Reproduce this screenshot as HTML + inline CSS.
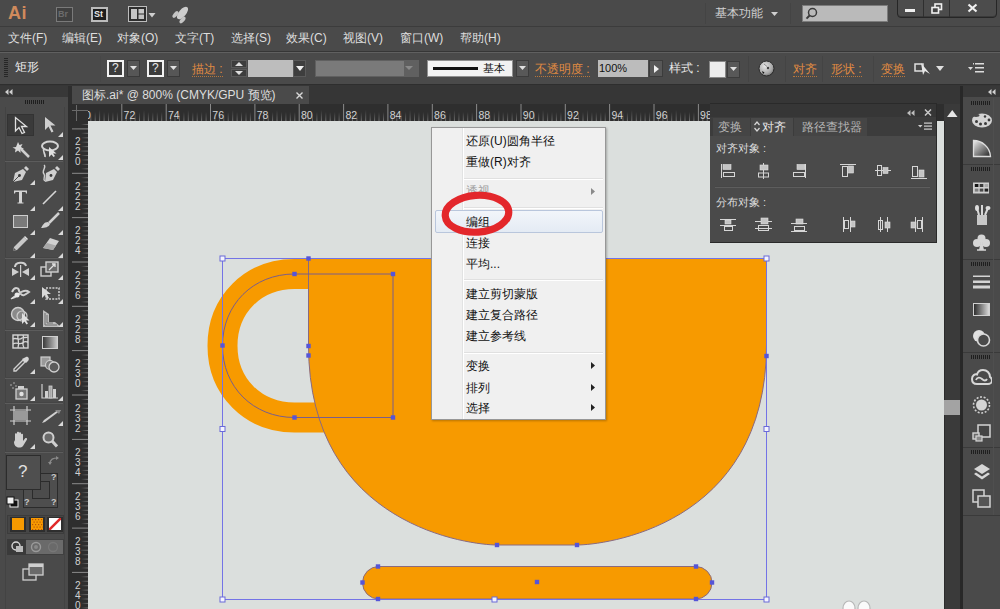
<!DOCTYPE html>
<html><head><meta charset="utf-8">
<style>
*{margin:0;padding:0;box-sizing:border-box}
html,body{width:1000px;height:609px;overflow:hidden;background:#4a4a4a;font-family:"Liberation Sans",sans-serif;color:#dcdcdc;position:relative}
.a{position:absolute;display:block}
.t{position:absolute;white-space:nowrap;font-size:12px;line-height:14px}
</style></head><body>
<div class="a" style="left:0px;top:0px;width:1000px;height:609px;background:#4a4a4a"></div>
<div class="a" style="left:0px;top:26px;width:1000px;height:1px;background:#3c3c3c"></div>
<div class="t" style="left:8px;top:2px;font-size:18px;line-height:22px;font-weight:bold;color:#d08a5c;letter-spacing:0.5px">Ai</div>
<div class="a" style="left:56px;top:7px;width:17px;height:15px;border:1px solid #7a7a7a;background:#404040"></div>
<div class="t" style="left:58px;top:9px;font-size:9px;line-height:11px;font-weight:bold;color:#6c6c6c">Br</div>
<div class="a" style="left:91px;top:7px;width:17px;height:15px;border:2px solid #bcbcbc;background:#1e1e1e"></div>
<div class="t" style="left:94px;top:9px;font-size:9px;line-height:11px;font-weight:bold;color:#e6e6e6">St</div>
<svg class="a" style="left:128px;top:6px;" width="29" height="16" viewBox="0 0 29 16"><rect x="0.5" y="0.5" width="18" height="15" fill="#2e2e2e" stroke="#bdbdbd" stroke-width="1"/><rect x="3" y="3" width="6" height="10" fill="#c6c6c6"/><rect x="10.5" y="3" width="5.5" height="4.5" fill="#c6c6c6"/><rect x="10.5" y="8.5" width="5.5" height="4.5" fill="#c0c0c0"/><path d="M20.5 7 h7 l-3.5 4.5z" fill="#cfcfcf"/></svg>
<svg class="a" style="left:169px;top:5px;" width="22" height="20" viewBox="0 0 22 20"><ellipse cx="13.5" cy="8" rx="7.5" ry="3.6" transform="rotate(-50 13.5 8)" fill="#cdcdcd"/><ellipse cx="6.5" cy="9.5" rx="4" ry="2" transform="rotate(-50 6.5 9.5)" fill="#c4c4c4"/><ellipse cx="13.5" cy="15" rx="4" ry="2" transform="rotate(-50 13.5 15)" fill="#c4c4c4"/></svg>
<div class="a" style="left:705px;top:3px;width:1px;height:21px;background:#444"></div>
<div class="a" style="left:790px;top:3px;width:1px;height:21px;background:#444"></div>
<div class="t" style="left:715px;top:6px;font-size:12px;line-height:15px;color:#d2d2d2">基本功能</div>
<svg class="a" style="left:771px;top:12px;" width="7" height="4" viewBox="0 0 7 4"><path d="M0 0h7l-3.5 4z" fill="#d0d0d0"/></svg>
<div class="a" style="left:802px;top:5px;width:86px;height:17px;background:#bababa;border:1px solid #7c7c7c"></div>
<svg class="a" style="left:805px;top:7px;" width="13" height="13" viewBox="0 0 13 13"><circle cx="7.5" cy="5.5" r="4" fill="none" stroke="#3a3a3a" stroke-width="1.5"/><path d="M4.8 8.3 L1.5 11.6" stroke="#3a3a3a" stroke-width="2"/></svg>
<div class="a" style="left:897px;top:-2px;width:100px;height:20px;background:#4c4c4c;border:1px solid #262626;border-radius:0 0 4px 4px;box-shadow:inset 0 -1px 0 #3a3a3a"></div>
<div class="a" style="left:923px;top:0px;width:1px;height:17px;background:#2f2f2f"></div>
<div class="a" style="left:949px;top:0px;width:1px;height:17px;background:#2f2f2f"></div>
<div class="a" style="left:905px;top:9px;width:10px;height:3px;background:#f0f0f0"></div>
<svg class="a" style="left:931px;top:3px;" width="12" height="11" viewBox="0 0 12 11"><rect x="4" y="1" width="6.5" height="5.5" fill="none" stroke="#f0f0f0" stroke-width="1.6"/><rect x="1" y="4.5" width="6.5" height="5.5" fill="#444" stroke="#f0f0f0" stroke-width="1.6"/></svg>
<svg class="a" style="left:967px;top:3px;" width="11" height="10" viewBox="0 0 11 10"><path d="M1.5 1.5 L9.5 8.5 M9.5 1.5 L1.5 8.5" stroke="#f0f0f0" stroke-width="2.2"/></svg>
<div class="a" style="left:0px;top:51px;width:1000px;height:1px;background:#363636"></div>
<div class="t" style="left:8px;top:31px;font-size:12px;line-height:15px;color:#dedede">文件(F)</div>
<div class="t" style="left:62px;top:31px;font-size:12px;line-height:15px;color:#dedede">编辑(E)</div>
<div class="t" style="left:117px;top:31px;font-size:12px;line-height:15px;color:#dedede">对象(O)</div>
<div class="t" style="left:175px;top:31px;font-size:12px;line-height:15px;color:#dedede">文字(T)</div>
<div class="t" style="left:231px;top:31px;font-size:12px;line-height:15px;color:#dedede">选择(S)</div>
<div class="t" style="left:286px;top:31px;font-size:12px;line-height:15px;color:#dedede">效果(C)</div>
<div class="t" style="left:343px;top:31px;font-size:12px;line-height:15px;color:#dedede">视图(V)</div>
<div class="t" style="left:400px;top:31px;font-size:12px;line-height:15px;color:#dedede">窗口(W)</div>
<div class="t" style="left:460px;top:31px;font-size:12px;line-height:15px;color:#dedede">帮助(H)</div>
<div class="a" style="left:0px;top:52px;width:1000px;height:1px;background:#606060"></div>
<div class="a" style="left:0px;top:84px;width:1000px;height:1px;background:#2e2e2e"></div>
<svg class="a" style="left:4px;top:58px;" width="5" height="20" viewBox="0 0 5 20"><rect x="0" y="0" width="4" height="1" fill="#262626"/><rect x="0" y="2" width="4" height="1" fill="#262626"/><rect x="0" y="4" width="4" height="1" fill="#262626"/><rect x="0" y="6" width="4" height="1" fill="#262626"/><rect x="0" y="8" width="4" height="1" fill="#262626"/><rect x="0" y="10" width="4" height="1" fill="#262626"/><rect x="0" y="12" width="4" height="1" fill="#262626"/><rect x="0" y="14" width="4" height="1" fill="#262626"/><rect x="0" y="16" width="4" height="1" fill="#262626"/><rect x="0" y="18" width="4" height="1" fill="#262626"/></svg>
<div class="t" style="left:15px;top:60px;font-size:12px;line-height:14px;font-weight:500;color:#ececec">矩形</div>
<div class="a" style="left:100px;top:56px;width:1px;height:26px;background:#474747"></div>
<div class="a" style="left:107px;top:60px;width:17px;height:17px;border:2px solid #f2f2f2;background:#3c3c3c"></div>
<div class="t" style="left:112px;top:62px;font-size:12px;line-height:13px;color:#e8e8e8">?</div>
<div class="a" style="left:127px;top:60px;width:13px;height:17px;background:#565656;border:1px solid #3a3a3a"></div>
<svg class="a" style="left:130px;top:66px;" width="7" height="4" viewBox="0 0 7 4"><path d="M0 0h7l-3.5 4z" fill="#e0e0e0"/></svg>
<div class="a" style="left:147px;top:60px;width:17px;height:17px;border:2px solid #f2f2f2;background:#3c3c3c"></div>
<div class="t" style="left:152px;top:62px;font-size:12px;line-height:13px;color:#e8e8e8">?</div>
<div class="a" style="left:167px;top:60px;width:13px;height:17px;background:#565656;border:1px solid #3a3a3a"></div>
<svg class="a" style="left:170px;top:66px;" width="7" height="4" viewBox="0 0 7 4"><path d="M0 0h7l-3.5 4z" fill="#e0e0e0"/></svg>
<div class="t" style="left:192px;top:62px;font-size:12px;line-height:14px;font-weight:500;color:#e08a42;border-bottom:1px dotted #b8763a">描边 :</div>
<div class="a" style="left:231px;top:60px;width:16px;height:8px;background:#3d3d3d;border:1px solid #5a5a5a"></div>
<div class="a" style="left:231px;top:69px;width:16px;height:8px;background:#3d3d3d;border:1px solid #5a5a5a"></div>
<svg class="a" style="left:235px;top:62px;" width="8" height="4" viewBox="0 0 8 4"><path d="M0 4h8l-4-4z" fill="#ddd"/></svg>
<svg class="a" style="left:235px;top:71px;" width="8" height="4" viewBox="0 0 8 4"><path d="M0 0h8l-4 4z" fill="#ddd"/></svg>
<div class="a" style="left:248px;top:60px;width:45px;height:17px;background:#bdbdbd"></div>
<div class="a" style="left:293px;top:60px;width:13px;height:17px;background:#3e3e3e;border:1px solid #5a5a5a"></div>
<svg class="a" style="left:296px;top:66px;" width="8" height="5" viewBox="0 0 8 5"><path d="M0 0h8l-4 5z" fill="#f0f0f0"/></svg>
<div class="a" style="left:315px;top:60px;width:104px;height:17px;background:#7a7a7a;border:1px solid #606060"></div>
<div class="a" style="left:404px;top:61px;width:14px;height:15px;background:#606060"></div>
<svg class="a" style="left:405px;top:66px;" width="8" height="4" viewBox="0 0 8 4"><path d="M0 0h8l-4 4z" fill="#8a8a8a"/></svg>
<div class="a" style="left:427px;top:60px;width:86px;height:17px;background:#f2f2f2;border:1px solid #909090"></div>
<div class="a" style="left:433px;top:67px;width:45px;height:3px;background:#111"></div>
<div class="t" style="left:483px;top:62px;font-size:11px;line-height:13px;color:#111">基本</div>
<div class="a" style="left:516px;top:60px;width:13px;height:17px;background:#585858;border:1px solid #3c3c3c"></div>
<svg class="a" style="left:519px;top:66px;" width="7" height="4" viewBox="0 0 7 4"><path d="M0 0h7l-3.5 4z" fill="#e0e0e0"/></svg>
<div class="t" style="left:535px;top:62px;font-size:12px;line-height:14px;font-weight:500;color:#e08a42;border-bottom:1px dotted #b8763a">不透明度 :</div>
<div class="a" style="left:598px;top:60px;width:50px;height:17px;background:#bcbcbc"></div>
<div class="t" style="left:599px;top:62px;font-size:11px;line-height:13px;color:#111">100%</div>
<div class="a" style="left:649px;top:60px;width:14px;height:17px;background:#585858;border:1px solid #3c3c3c"></div>
<svg class="a" style="left:654px;top:65px;" width="5" height="8" viewBox="0 0 5 8"><path d="M0 0v8l5-4z" fill="#f0f0f0"/></svg>
<div class="t" style="left:669px;top:61px;font-size:12px;line-height:14px;font-weight:500;color:#e6e6e6">样式 :</div>
<div class="a" style="left:709px;top:61px;width:17px;height:17px;background:#ececec;border:1px solid #888"></div>
<div class="a" style="left:727px;top:61px;width:13px;height:17px;background:#585858;border:1px solid #3c3c3c"></div>
<svg class="a" style="left:730px;top:67px;" width="7" height="4" viewBox="0 0 7 4"><path d="M0 0h7l-3.5 4z" fill="#e0e0e0"/></svg>
<div class="a" style="left:748px;top:56px;width:1px;height:26px;background:#444"></div>
<svg class="a" style="left:758px;top:60px" width="17" height="17" viewBox="0 0 17 17"><defs><radialGradient id="gl" cx="0.4" cy="0.35" r="0.7"><stop offset="0" stop-color="#e6e6e6"/><stop offset="0.7" stop-color="#a8a8a8"/><stop offset="1" stop-color="#6a6a6a"/></radialGradient></defs><circle cx="8.5" cy="8.5" r="7.5" fill="url(#gl)" stroke="#2a2a2a" stroke-width="1"/><path d="M4 11 L6.5 12.5 L5 14z" fill="#111"/><circle cx="10" cy="8" r="1.2" fill="#444"/><path d="M6 4 L9 6.5" stroke="#777" stroke-width="0.8"/></svg>
<div class="a" style="left:785px;top:56px;width:1px;height:26px;background:#444"></div>
<div class="t" style="left:793px;top:62px;font-size:12px;line-height:14px;font-weight:500;color:#e08a42;border-bottom:1px dotted #b8763a">对齐</div>
<div class="a" style="left:822px;top:56px;width:1px;height:26px;background:#444"></div>
<div class="t" style="left:831px;top:62px;font-size:12px;line-height:14px;font-weight:500;color:#e08a42;border-bottom:1px dotted #b8763a">形状 :</div>
<div class="a" style="left:873px;top:56px;width:1px;height:26px;background:#444"></div>
<div class="t" style="left:881px;top:62px;font-size:12px;line-height:14px;font-weight:500;color:#e08a42;border-bottom:1px dotted #b8763a">变换</div>
<svg class="a" style="left:914px;top:60px;" width="18" height="16" viewBox="0 0 18 16"><rect x="1" y="4" width="8" height="7" fill="none" stroke="#e0e0e0" stroke-width="1.5"/><path d="M7 3 L16 14 L11 11 L9 15Z" fill="#e8e8e8"/></svg>
<svg class="a" style="left:936px;top:66px;" width="8" height="5" viewBox="0 0 8 5"><path d="M0 0h8l-4 5z" fill="#e0e0e0"/></svg>
<svg class="a" style="left:967px;top:62px;" width="18" height="12" viewBox="0 0 18 12"><path d="M1 5h5l-2.5 3z" fill="#ddd"/><rect x="8" y="1" width="9" height="1.5" fill="#ddd"/><rect x="8" y="5" width="9" height="1.5" fill="#ddd"/><rect x="8" y="9" width="9" height="1.5" fill="#ddd"/><rect x="6" y="1" width="1" height="1.5" fill="#ddd"/></svg>
<div class="a" style="left:0px;top:85px;width:1000px;height:524px;background:#363636"></div>
<div class="a" style="left:0px;top:86px;width:68px;height:523px;background:#4a4a4a"></div>
<div class="a" style="left:0px;top:86px;width:68px;height:11px;background:#383838"></div>
<div class="a" style="left:68px;top:86px;width:4px;height:523px;background:#2e2e2e"></div>
<div class="a" style="left:5px;top:107px;width:1px;height:502px;background:#434343"></div>
<div class="a" style="left:64px;top:107px;width:1px;height:502px;background:#434343"></div>
<svg class="a" style="left:5px;top:89px;" width="8" height="6" viewBox="0 0 8 6"><path d="M3.5 0v6L0 3z M7.5 0v6L4 3z" fill="#cfcfcf"/></svg>
<svg class="a" style="left:25px;top:100px;" width="20" height="5" viewBox="0 0 20 5"><rect x="0" y="0" width="1" height="4" fill="#1e1e1e"/><rect x="2" y="0" width="1" height="4" fill="#1e1e1e"/><rect x="4" y="0" width="1" height="4" fill="#1e1e1e"/><rect x="6" y="0" width="1" height="4" fill="#1e1e1e"/><rect x="8" y="0" width="1" height="4" fill="#1e1e1e"/><rect x="10" y="0" width="1" height="4" fill="#1e1e1e"/><rect x="12" y="0" width="1" height="4" fill="#1e1e1e"/><rect x="14" y="0" width="1" height="4" fill="#1e1e1e"/><rect x="16" y="0" width="1" height="4" fill="#1e1e1e"/><rect x="18" y="0" width="1" height="4" fill="#1e1e1e"/></svg>
<div class="a" style="left:7px;top:114px;width:27px;height:22px;background:#3a3a3a;border:1px solid #333"></div>
<div class="a" style="left:5px;top:160px;width:58px;height:1px;background:#454545"></div>
<div class="a" style="left:5px;top:161px;width:58px;height:1px;background:#5c5c5c"></div>
<div class="a" style="left:5px;top:257px;width:58px;height:1px;background:#454545"></div>
<div class="a" style="left:5px;top:258px;width:58px;height:1px;background:#5c5c5c"></div>
<div class="a" style="left:5px;top:329px;width:58px;height:1px;background:#454545"></div>
<div class="a" style="left:5px;top:330px;width:58px;height:1px;background:#5c5c5c"></div>
<div class="a" style="left:5px;top:377px;width:58px;height:1px;background:#454545"></div>
<div class="a" style="left:5px;top:378px;width:58px;height:1px;background:#5c5c5c"></div>
<div class="a" style="left:5px;top:402px;width:58px;height:1px;background:#454545"></div>
<div class="a" style="left:5px;top:403px;width:58px;height:1px;background:#5c5c5c"></div>
<div class="a" style="left:5px;top:451px;width:58px;height:1px;background:#454545"></div>
<div class="a" style="left:5px;top:452px;width:58px;height:1px;background:#5c5c5c"></div>
<svg class="a" style="left:13px;top:116px;" width="16" height="19" viewBox="0 0 16 19"><path d="M2.5 1.5 V15 L6 11.5 L9 17.5 L11.5 16.5 L8.5 10.5 L13.5 10.5 Z" fill="#3a3a3a" stroke="#e0e0e0" stroke-width="1.3"/></svg>
<svg class="a" style="left:43px;top:116px;" width="15" height="18" viewBox="0 0 15 18"><path d="M2 1 V14 L5.5 10.5 L8.5 16.5 L10.5 15.5 L7.5 9.5 L12.5 9.5 Z" fill="#cfcfcf"/></svg>
<svg class="a" style="left:58px;top:132px;" width="5" height="5" viewBox="0 0 5 5"><path d="M5 0V5H0z" fill="#d8d8d8"/></svg>
<svg class="a" style="left:11px;top:139px;" width="20" height="19" viewBox="0 0 20 19"><path d="M7 3 l1.5 3 3-1 -1.5 3 3 2 -3.5 .5 0 3.5 -2.5-2.5 -3 2 .5-3.5 -3-1.5 3.5-.5z" fill="#d8d8d8"/><path d="M10 10 L18 18" stroke="#cfcfcf" stroke-width="2.5"/></svg>
<svg class="a" style="left:40px;top:140px;" width="20" height="18" viewBox="0 0 20 18"><ellipse cx="10" cy="6" rx="8" ry="4.5" fill="none" stroke="#d4d4d4" stroke-width="2"/><path d="M4 8 C2 12 6 14 5 17" fill="none" stroke="#d4d4d4" stroke-width="1.8"/><path d="M9 7 V17 L11.5 14.5 L13.5 17 L15 16 L13 13.5 L16.5 13.5Z" fill="#e0e0e0"/></svg>
<svg class="a" style="left:58px;top:155px;" width="5" height="5" viewBox="0 0 5 5"><path d="M5 0V5H0z" fill="#d8d8d8"/></svg>
<svg class="a" style="left:11px;top:165px;" width="19" height="18" viewBox="0 0 19 18"><path d="M15 1 L18 4 L16 6 L13 3Z" fill="#d0d0d0"/><path d="M12 4 L15 7 L11 15 L2 17 L4 8Z" fill="#cfcfcf"/><circle cx="8.5" cy="10.5" r="1.4" fill="#3a3a3a"/><path d="M2 17 L8 11" stroke="#3a3a3a" stroke-width="0.9"/></svg>
<svg class="a" style="left:30px;top:180px;" width="5" height="5" viewBox="0 0 5 5"><path d="M5 0V5H0z" fill="#d8d8d8"/></svg>
<svg class="a" style="left:40px;top:164px;" width="21" height="19" viewBox="0 0 21 19"><path d="M17 2 L20 5 L18 7 L15 4Z" fill="#d0d0d0"/><path d="M14 5 L17 8 L13 16 L5 18 L6 9Z" fill="#cfcfcf"/><circle cx="11" cy="11.5" r="1.4" fill="#3a3a3a"/><path d="M4 1 C7 3 1 7 4 10 C6 13 2 15 5 17" fill="none" stroke="#cfcfcf" stroke-width="1.4"/></svg>
<svg class="a" style="left:13px;top:189px;" width="15" height="15" viewBox="0 0 15 15"><path d="M1 1.5 H14 V4.5 H13 L12.5 3 H9 V13.5 H10.5 V14.5 H4.5 V13.5 H6 V3 H2.5 L2 4.5 H1Z" fill="#d4d4d4"/></svg>
<svg class="a" style="left:30px;top:206px;" width="5" height="5" viewBox="0 0 5 5"><path d="M5 0V5H0z" fill="#d8d8d8"/></svg>
<svg class="a" style="left:41px;top:190px;" width="16" height="15" viewBox="0 0 16 15"><path d="M2 14 L15 1" stroke="#d6d6d6" stroke-width="1.6"/></svg>
<svg class="a" style="left:58px;top:206px;" width="5" height="5" viewBox="0 0 5 5"><path d="M5 0V5H0z" fill="#d8d8d8"/></svg>
<div class="a" style="left:13px;top:215px;width:15px;height:13px;background:#7a7a7a;border:1.5px solid #cdcdcd"></div>
<svg class="a" style="left:30px;top:230px;" width="5" height="5" viewBox="0 0 5 5"><path d="M5 0V5H0z" fill="#d8d8d8"/></svg>
<svg class="a" style="left:40px;top:212px;" width="20" height="17" viewBox="0 0 20 17"><path d="M19 1 L9 11" stroke="#d0d0d0" stroke-width="2.5"/><path d="M8 10 C4 10 3 13 1 16 C5 16 9 15 10 12Z" fill="#d0d0d0"/></svg>
<svg class="a" style="left:58px;top:230px;" width="5" height="5" viewBox="0 0 5 5"><path d="M5 0V5H0z" fill="#d8d8d8"/></svg>
<svg class="a" style="left:11px;top:235px;" width="18" height="18" viewBox="0 0 18 18"><path d="M13 2 L16 5 L6 15 L2 16 L3 12Z" fill="#c8c8c8"/><path d="M13 2 L16 5 L17 4 L14 1Z" fill="#e6e6e6"/><path d="M2 16 L3 13 L5 15Z" fill="#555"/></svg>
<svg class="a" style="left:30px;top:253px;" width="5" height="5" viewBox="0 0 5 5"><path d="M5 0V5H0z" fill="#d8d8d8"/></svg>
<svg class="a" style="left:41px;top:237px;" width="19" height="15" viewBox="0 0 19 15"><path d="M9 1 L18 4 L12 13 L2 11Z" fill="#d0d0d0"/><path d="M2 11 L6 6 L15 8.5 L12 13Z" fill="#a8a8a8"/></svg>
<svg class="a" style="left:58px;top:253px;" width="5" height="5" viewBox="0 0 5 5"><path d="M5 0V5H0z" fill="#d8d8d8"/></svg>
<svg class="a" style="left:11px;top:260px;" width="19" height="17" viewBox="0 0 19 17"><path d="M4 7 C4 2 14 1 15 6" fill="none" stroke="#cfcfcf" stroke-width="2"/><path d="M1 8 L8 12 L1 16Z M18 8 L11 12 L18 16Z" fill="#cfcfcf"/><rect x="9" y="5" width="1.2" height="12" fill="#cfcfcf"/></svg>
<svg class="a" style="left:30px;top:275px;" width="5" height="5" viewBox="0 0 5 5"><path d="M5 0V5H0z" fill="#d8d8d8"/></svg>
<svg class="a" style="left:40px;top:261px;" width="19" height="16" viewBox="0 0 19 16"><rect x="1" y="6" width="10" height="9" fill="none" stroke="#cfcfcf" stroke-width="1.4"/><rect x="6" y="1" width="12" height="10" fill="#6a6a6a" stroke="#cfcfcf" stroke-width="1.4"/><path d="M9 9 L15 3 M12 3 H15 V6" stroke="#e0e0e0" stroke-width="1.3" fill="none"/></svg>
<svg class="a" style="left:58px;top:275px;" width="5" height="5" viewBox="0 0 5 5"><path d="M5 0V5H0z" fill="#d8d8d8"/></svg>
<svg class="a" style="left:10px;top:284px;" width="21" height="17" viewBox="0 0 21 17"><path d="M2 8 C5 2 9 4 9 7 C10 11 14 4 19 8 C16 10 13 13 11 10 C8 8 6 15 2 14" fill="none" stroke="#d0d0d0" stroke-width="2"/><circle cx="7" cy="11" r="2.5" fill="#e8e8e8"/><path d="M1 15 L5 12" stroke="#ddd" stroke-width="1.3"/></svg>
<svg class="a" style="left:30px;top:299px;" width="5" height="5" viewBox="0 0 5 5"><path d="M5 0V5H0z" fill="#d8d8d8"/></svg>
<svg class="a" style="left:41px;top:286px;" width="19" height="14" viewBox="0 0 19 14"><rect x="5" y="2" width="13" height="11" fill="none" stroke="#d0d0d0" stroke-width="1.5" stroke-dasharray="2 1.2"/><path d="M1 1 V12 L4 9 L6 13 L8 12 L6 8 L10 8Z" fill="#d8d8d8"/></svg>
<svg class="a" style="left:58px;top:299px;" width="5" height="5" viewBox="0 0 5 5"><path d="M5 0V5H0z" fill="#d8d8d8"/></svg>
<svg class="a" style="left:10px;top:306px;" width="22" height="19" viewBox="0 0 22 19"><circle cx="8" cy="8" r="6.5" fill="#8a8a8a" stroke="#cfcfcf" stroke-width="1.4"/><circle cx="12" cy="10" r="5" fill="none" stroke="#cfcfcf" stroke-width="1.2"/><path d="M12 7 V18 L14.5 15.5 L16.5 18.5 L18 17.5 L16 14.5 L19.5 14.5Z" fill="#e0e0e0"/></svg>
<svg class="a" style="left:30px;top:322px;" width="5" height="5" viewBox="0 0 5 5"><path d="M5 0V5H0z" fill="#d8d8d8"/></svg>
<svg class="a" style="left:41px;top:309px;" width="21" height="19" viewBox="0 0 21 19"><path d="M2 1 V18 H20 L14 13 H8 V5Z" fill="#bdbdbd"/><path d="M4 4 V16 H16 M6 6 V14 H12" stroke="#6f6f6f" stroke-width="1" fill="none"/></svg>
<svg class="a" style="left:58px;top:322px;" width="5" height="5" viewBox="0 0 5 5"><path d="M5 0V5H0z" fill="#d8d8d8"/></svg>
<svg class="a" style="left:12px;top:334px;" width="17" height="15" viewBox="0 0 17 15"><rect x="1" y="1" width="15" height="13" fill="#4a4a4a" stroke="#d6d6d6" stroke-width="1.4"/><path d="M1 5 C4 3 7 7 10 4 C12 3 14 4 16 3 M1 10 C5 7 8 12 12 8 C13 7 15 8 16 8 M6 1 C5 5 8 8 6 14 M11 1 C13 5 9 9 12 14" fill="none" stroke="#d6d6d6" stroke-width="1.3"/></svg>
<div class="a" style="left:42px;top:336px;width:16px;height:13px;border:1px solid #cfcfcf;background:linear-gradient(90deg,#3a3a3a,#c8c8c8)"></div>
<svg class="a" style="left:12px;top:355px;" width="18" height="18" viewBox="0 0 18 18"><path d="M11 5 L13 7 L4 16 L2 16 L2 14Z" fill="none" stroke="#d0d0d0" stroke-width="1.4"/><path d="M10 4 L14 8 L16 6 C18 4 16 1 14 2Z" fill="#d6d6d6"/></svg>
<svg class="a" style="left:30px;top:369px;" width="5" height="5" viewBox="0 0 5 5"><path d="M5 0V5H0z" fill="#d8d8d8"/></svg>
<svg class="a" style="left:40px;top:356px;" width="20" height="17" viewBox="0 0 20 17"><rect x="1" y="1" width="9" height="9" fill="#9a9a9a" stroke="#d0d0d0" stroke-width="1.2"/><circle cx="10" cy="9" r="4.5" fill="#7a7a7a" stroke="#d0d0d0" stroke-width="1.2"/><circle cx="14" cy="11" r="5" fill="#5a5a5a" stroke="#d0d0d0" stroke-width="1.3"/></svg>
<svg class="a" style="left:9px;top:382px;" width="22" height="18" viewBox="0 0 22 18"><path d="M1 3 h2 M4 1 h2 M3 6 h2 M6 4 h2" stroke="#aaa" stroke-width="1"/><rect x="9" y="4" width="6" height="3" fill="#cfcfcf"/><rect x="7" y="7" width="11" height="10" fill="#777" stroke="#d0d0d0" stroke-width="1.3"/><circle cx="12.5" cy="12" r="2.2" fill="#e0e0e0"/></svg>
<svg class="a" style="left:30px;top:396px;" width="5" height="5" viewBox="0 0 5 5"><path d="M5 0V5H0z" fill="#d8d8d8"/></svg>
<svg class="a" style="left:41px;top:383px;" width="18" height="16" viewBox="0 0 18 16"><path d="M1 1 V15 H17" stroke="#d0d0d0" stroke-width="1.2" fill="none"/><rect x="4" y="8" width="3" height="7" fill="#d0d0d0"/><rect x="8" y="3" width="3" height="12" fill="#a8a8a8" stroke="#d0d0d0" stroke-width="0.8"/><rect x="12" y="6" width="3" height="9" fill="#d0d0d0"/></svg>
<svg class="a" style="left:58px;top:396px;" width="5" height="5" viewBox="0 0 5 5"><path d="M5 0V5H0z" fill="#d8d8d8"/></svg>
<svg class="a" style="left:9px;top:405px;" width="23" height="21" viewBox="0 0 23 21"><path d="M5 1 V20 M18 1 V20 M1 5 H22 M1 16 H22" stroke="#cfcfcf" stroke-width="1.2"/><rect x="6" y="6" width="11" height="9" fill="#9a9a9a"/></svg>
<svg class="a" style="left:41px;top:409px;" width="21" height="15" viewBox="0 0 21 15"><path d="M20 1 L4 13 L1 14 L3 11 L17 1Z" fill="#d0d0d0"/><path d="M14 1 L20 1 L18 5Z" fill="#888"/></svg>
<svg class="a" style="left:58px;top:421px;" width="5" height="5" viewBox="0 0 5 5"><path d="M5 0V5H0z" fill="#d8d8d8"/></svg>
<svg class="a" style="left:11px;top:431px;" width="19" height="17" viewBox="0 0 19 17"><path d="M4 9 V3 C4 2 6 2 6 3 V8 V1.5 C6 0.5 8 0.5 8 1.5 V8 V2 C8 1 10 1 10 2 V8 V3.5 C10 2.5 12 2.5 12 3.5 V10 L14 7.5 C15 6.5 16.5 7.5 16 8.5 L12 15 C11 16 10 16.5 8 16.5 C5 16.5 3 14 3 11 Z" fill="#cfcfcf"/></svg>
<svg class="a" style="left:30px;top:444px;" width="5" height="5" viewBox="0 0 5 5"><path d="M5 0V5H0z" fill="#d8d8d8"/></svg>
<svg class="a" style="left:42px;top:431px;" width="16" height="17" viewBox="0 0 16 17"><circle cx="6.5" cy="6.5" r="5" fill="#6a6a6a" stroke="#cfcfcf" stroke-width="2"/><path d="M10 10 L15 15.5" stroke="#cfcfcf" stroke-width="3"/></svg>
<div class="a" style="left:23px;top:473px;width:35px;height:35px;background:#4e4e4e;border:1.5px solid #2b2b2b"></div>
<div class="a" style="left:32px;top:481px;width:18px;height:18px;background:#4c4c4c;border:1.5px solid #2b2b2b"></div>
<div class="a" style="left:6px;top:455px;width:35px;height:35px;background:#4f4f4f;border:1px solid #2c2c2c"></div>
<div class="t" style="left:18px;top:462px;font-size:17px;line-height:19px;color:#e0e0e0">?</div>
<div class="t" style="left:51px;top:472px;font-size:9px;line-height:10px;color:#c8c8c8;font-weight:bold">?</div>
<div class="t" style="left:24px;top:497px;font-size:9px;line-height:10px;color:#c8c8c8;font-weight:bold">?</div>
<div class="t" style="left:51px;top:497px;font-size:9px;line-height:10px;color:#c8c8c8;font-weight:bold">?</div>
<svg class="a" style="left:47px;top:455px;" width="16" height="13" viewBox="0 0 16 13"><path d="M3 9 C3 4 6 3 11 3" fill="none" stroke="#8a8a8a" stroke-width="1.2"/><path d="M9 1 L12 3 L9 5z M1 7 L3 10 L5 7z" fill="#8a8a8a"/></svg>
<svg class="a" style="left:6px;top:496px;" width="13" height="12" viewBox="0 0 13 12"><rect x="4" y="4" width="8" height="7" fill="#111" stroke="#eee" stroke-width="1"/><rect x="1" y="1" width="7" height="7" fill="#f2f2f2" stroke="#111" stroke-width="1"/></svg>
<div class="a" style="left:7px;top:515px;width:57px;height:19px;background:#464646;border:1px solid #3c3c3c"></div>
<div class="a" style="left:10px;top:517px;width:16px;height:15px;background:#2e2e2e"></div>
<div class="a" style="left:12px;top:518px;width:12px;height:12px;background:#f79a00"></div>
<div class="a" style="left:29px;top:517px;width:16px;height:15px;background:#2e2e2e"></div>
<svg class="a" style="left:31px;top:518px;" width="12" height="12" viewBox="0 0 12 12"><rect width="12" height="12" fill="#f79a00"/><rect x="1.0" y="1.0" width="1.2" height="1.2" fill="#b8560a"/><rect x="2.5" y="3.5" width="1.2" height="1.2" fill="#b8560a"/><rect x="1.0" y="6.0" width="1.2" height="1.2" fill="#b8560a"/><rect x="2.5" y="8.5" width="1.2" height="1.2" fill="#b8560a"/><rect x="1.0" y="11.0" width="1.2" height="1.2" fill="#b8560a"/><rect x="4.0" y="1.0" width="1.2" height="1.2" fill="#b8560a"/><rect x="5.5" y="3.5" width="1.2" height="1.2" fill="#b8560a"/><rect x="4.0" y="6.0" width="1.2" height="1.2" fill="#b8560a"/><rect x="5.5" y="8.5" width="1.2" height="1.2" fill="#b8560a"/><rect x="4.0" y="11.0" width="1.2" height="1.2" fill="#b8560a"/><rect x="7.0" y="1.0" width="1.2" height="1.2" fill="#b8560a"/><rect x="8.5" y="3.5" width="1.2" height="1.2" fill="#b8560a"/><rect x="7.0" y="6.0" width="1.2" height="1.2" fill="#b8560a"/><rect x="8.5" y="8.5" width="1.2" height="1.2" fill="#b8560a"/><rect x="7.0" y="11.0" width="1.2" height="1.2" fill="#b8560a"/><rect x="10.0" y="1.0" width="1.2" height="1.2" fill="#b8560a"/><rect x="11.5" y="3.5" width="1.2" height="1.2" fill="#b8560a"/><rect x="10.0" y="6.0" width="1.2" height="1.2" fill="#b8560a"/><rect x="11.5" y="8.5" width="1.2" height="1.2" fill="#b8560a"/><rect x="10.0" y="11.0" width="1.2" height="1.2" fill="#b8560a"/></svg>
<div class="a" style="left:47px;top:517px;width:16px;height:15px;background:#2e2e2e"></div>
<svg class="a" style="left:49px;top:518px;" width="12" height="12" viewBox="0 0 12 12"><rect width="12" height="12" fill="#fff"/><path d="M0 12 L12 0" stroke="#e02828" stroke-width="2.5"/></svg>
<div class="a" style="left:7px;top:539px;width:57px;height:16px;background:#6a6a6a;border:1px solid #404040"></div>
<div class="a" style="left:7px;top:539px;width:19px;height:16px;background:#3a3a3a"></div>
<svg class="a" style="left:11px;top:541px;" width="13" height="12" viewBox="0 0 13 12"><circle cx="5" cy="5" r="4" fill="none" stroke="#d8d8d8" stroke-width="1.4"/><rect x="5" y="5" width="7" height="6" fill="#bbb"/></svg>
<svg class="a" style="left:30px;top:541px;" width="14" height="12" viewBox="0 0 14 12"><circle cx="6" cy="6" r="4.5" fill="none" stroke="#9a9a9a" stroke-width="1.4"/><circle cx="6" cy="6" r="2" fill="#8a8a8a"/></svg>
<svg class="a" style="left:47px;top:541px;" width="13" height="12" viewBox="0 0 13 12"><circle cx="6" cy="6" r="4.5" fill="none" stroke="#777" stroke-width="1.3"/></svg>
<svg class="a" style="left:22px;top:563px;" width="22" height="18" viewBox="0 0 22 18"><rect x="1" y="6" width="13" height="11" fill="#4a4a4a" stroke="#cfcfcf" stroke-width="1.3"/><rect x="7" y="1" width="14" height="11" fill="#6a6a6a" stroke="#cfcfcf" stroke-width="1.3"/><rect x="7" y="1" width="14" height="3" fill="#cfcfcf"/></svg>
<div class="a" style="left:72px;top:86px;width:237px;height:18px;background:#4a4a4a"></div>
<div class="t" style="left:82px;top:88px;font-size:12px;line-height:14px;color:#dedede">图标.ai* @ 800% (CMYK/GPU 预览)</div>
<svg class="a" style="left:296px;top:92px;" width="8" height="7" viewBox="0 0 8 7"><path d="M0.5 0.5 L6.5 6.5 M6.5 0.5 L0.5 6.5" stroke="#d8d8d8" stroke-width="1.4"/></svg>
<div class="a" style="left:72px;top:104px;width:872px;height:17px;background:#2e2e2e"></div>
<div class="a" style="left:72px;top:121px;width:16px;height:488px;background:#2e2e2e"></div>
<svg class="a" style="left:0;top:0" width="1000" height="609"><defs><linearGradient id="tg" x1="0" y1="0" x2="0" y2="1"><stop offset="0" stop-color="#2e2e2e"/><stop offset="1" stop-color="#707070"/></linearGradient><linearGradient id="tgl" x1="0" y1="0" x2="1" y2="0"><stop offset="0" stop-color="#2e2e2e"/><stop offset="1" stop-color="#707070"/></linearGradient><clipPath id="cpt"><rect x="88" y="104" width="848" height="17"/></clipPath><clipPath id="cpl"><rect x="72" y="121" width="16" height="488"/></clipPath></defs><text clip-path="url(#cpt)" x="34.9" y="119.3" font-size="10.5" fill="#d2d2d2" font-family="Liberation Sans">68</text><rect x="90.3" y="112" width="1" height="9" fill="url(#tg)"/><rect x="94.7" y="112" width="1" height="9" fill="url(#tg)"/><rect x="99.1" y="110" width="1" height="11" fill="url(#tg)"/><rect x="103.6" y="112" width="1" height="9" fill="url(#tg)"/><rect x="108.0" y="112" width="1" height="9" fill="url(#tg)"/><rect x="112.4" y="112" width="1" height="9" fill="url(#tg)"/><rect x="116.9" y="112" width="1" height="9" fill="url(#tg)"/><text clip-path="url(#cpt)" x="79.2" y="119.3" font-size="10.5" fill="#d2d2d2" font-family="Liberation Sans">70</text><rect x="121.3" y="104" width="1" height="17" fill="#8a8a8a"/><rect x="125.7" y="112" width="1" height="9" fill="url(#tg)"/><rect x="130.2" y="112" width="1" height="9" fill="url(#tg)"/><rect x="134.6" y="112" width="1" height="9" fill="url(#tg)"/><rect x="139.0" y="112" width="1" height="9" fill="url(#tg)"/><rect x="143.5" y="110" width="1" height="11" fill="url(#tg)"/><rect x="147.9" y="112" width="1" height="9" fill="url(#tg)"/><rect x="152.3" y="112" width="1" height="9" fill="url(#tg)"/><rect x="156.8" y="112" width="1" height="9" fill="url(#tg)"/><rect x="161.2" y="112" width="1" height="9" fill="url(#tg)"/><text clip-path="url(#cpt)" x="123.6" y="119.3" font-size="10.5" fill="#d2d2d2" font-family="Liberation Sans">72</text><rect x="165.7" y="104" width="1" height="17" fill="#8a8a8a"/><rect x="170.1" y="112" width="1" height="9" fill="url(#tg)"/><rect x="174.5" y="112" width="1" height="9" fill="url(#tg)"/><rect x="179.0" y="112" width="1" height="9" fill="url(#tg)"/><rect x="183.4" y="112" width="1" height="9" fill="url(#tg)"/><rect x="187.8" y="110" width="1" height="11" fill="url(#tg)"/><rect x="192.3" y="112" width="1" height="9" fill="url(#tg)"/><rect x="196.7" y="112" width="1" height="9" fill="url(#tg)"/><rect x="201.1" y="112" width="1" height="9" fill="url(#tg)"/><rect x="205.6" y="112" width="1" height="9" fill="url(#tg)"/><text clip-path="url(#cpt)" x="168.0" y="119.3" font-size="10.5" fill="#d2d2d2" font-family="Liberation Sans">74</text><rect x="210.0" y="104" width="1" height="17" fill="#8a8a8a"/><rect x="214.4" y="112" width="1" height="9" fill="url(#tg)"/><rect x="218.9" y="112" width="1" height="9" fill="url(#tg)"/><rect x="223.3" y="112" width="1" height="9" fill="url(#tg)"/><rect x="227.7" y="112" width="1" height="9" fill="url(#tg)"/><rect x="232.2" y="110" width="1" height="11" fill="url(#tg)"/><rect x="236.6" y="112" width="1" height="9" fill="url(#tg)"/><rect x="241.0" y="112" width="1" height="9" fill="url(#tg)"/><rect x="245.5" y="112" width="1" height="9" fill="url(#tg)"/><rect x="249.9" y="112" width="1" height="9" fill="url(#tg)"/><text clip-path="url(#cpt)" x="212.3" y="119.3" font-size="10.5" fill="#d2d2d2" font-family="Liberation Sans">76</text><rect x="254.4" y="104" width="1" height="17" fill="#8a8a8a"/><rect x="258.8" y="112" width="1" height="9" fill="url(#tg)"/><rect x="263.2" y="112" width="1" height="9" fill="url(#tg)"/><rect x="267.7" y="112" width="1" height="9" fill="url(#tg)"/><rect x="272.1" y="112" width="1" height="9" fill="url(#tg)"/><rect x="276.5" y="110" width="1" height="11" fill="url(#tg)"/><rect x="281.0" y="112" width="1" height="9" fill="url(#tg)"/><rect x="285.4" y="112" width="1" height="9" fill="url(#tg)"/><rect x="289.8" y="112" width="1" height="9" fill="url(#tg)"/><rect x="294.3" y="112" width="1" height="9" fill="url(#tg)"/><text clip-path="url(#cpt)" x="256.7" y="119.3" font-size="10.5" fill="#d2d2d2" font-family="Liberation Sans">78</text><rect x="298.7" y="104" width="1" height="17" fill="#8a8a8a"/><rect x="303.1" y="112" width="1" height="9" fill="url(#tg)"/><rect x="307.6" y="112" width="1" height="9" fill="url(#tg)"/><rect x="312.0" y="112" width="1" height="9" fill="url(#tg)"/><rect x="316.4" y="112" width="1" height="9" fill="url(#tg)"/><rect x="320.9" y="110" width="1" height="11" fill="url(#tg)"/><rect x="325.3" y="112" width="1" height="9" fill="url(#tg)"/><rect x="329.7" y="112" width="1" height="9" fill="url(#tg)"/><rect x="334.2" y="112" width="1" height="9" fill="url(#tg)"/><rect x="338.6" y="112" width="1" height="9" fill="url(#tg)"/><text clip-path="url(#cpt)" x="301.0" y="119.3" font-size="10.5" fill="#d2d2d2" font-family="Liberation Sans">80</text><rect x="343.1" y="104" width="1" height="17" fill="#8a8a8a"/><rect x="347.5" y="112" width="1" height="9" fill="url(#tg)"/><rect x="351.9" y="112" width="1" height="9" fill="url(#tg)"/><rect x="356.4" y="112" width="1" height="9" fill="url(#tg)"/><rect x="360.8" y="112" width="1" height="9" fill="url(#tg)"/><rect x="365.2" y="110" width="1" height="11" fill="url(#tg)"/><rect x="369.7" y="112" width="1" height="9" fill="url(#tg)"/><rect x="374.1" y="112" width="1" height="9" fill="url(#tg)"/><rect x="378.5" y="112" width="1" height="9" fill="url(#tg)"/><rect x="383.0" y="112" width="1" height="9" fill="url(#tg)"/><text clip-path="url(#cpt)" x="345.4" y="119.3" font-size="10.5" fill="#d2d2d2" font-family="Liberation Sans">82</text><rect x="387.4" y="104" width="1" height="17" fill="#8a8a8a"/><rect x="391.8" y="112" width="1" height="9" fill="url(#tg)"/><rect x="396.3" y="112" width="1" height="9" fill="url(#tg)"/><rect x="400.7" y="112" width="1" height="9" fill="url(#tg)"/><rect x="405.1" y="112" width="1" height="9" fill="url(#tg)"/><rect x="409.6" y="110" width="1" height="11" fill="url(#tg)"/><rect x="414.0" y="112" width="1" height="9" fill="url(#tg)"/><rect x="418.4" y="112" width="1" height="9" fill="url(#tg)"/><rect x="422.9" y="112" width="1" height="9" fill="url(#tg)"/><rect x="427.3" y="112" width="1" height="9" fill="url(#tg)"/><text clip-path="url(#cpt)" x="389.7" y="119.3" font-size="10.5" fill="#d2d2d2" font-family="Liberation Sans">84</text><rect x="431.8" y="104" width="1" height="17" fill="#8a8a8a"/><rect x="436.2" y="112" width="1" height="9" fill="url(#tg)"/><rect x="440.6" y="112" width="1" height="9" fill="url(#tg)"/><rect x="445.1" y="112" width="1" height="9" fill="url(#tg)"/><rect x="449.5" y="112" width="1" height="9" fill="url(#tg)"/><rect x="453.9" y="110" width="1" height="11" fill="url(#tg)"/><rect x="458.4" y="112" width="1" height="9" fill="url(#tg)"/><rect x="462.8" y="112" width="1" height="9" fill="url(#tg)"/><rect x="467.2" y="112" width="1" height="9" fill="url(#tg)"/><rect x="471.7" y="112" width="1" height="9" fill="url(#tg)"/><text clip-path="url(#cpt)" x="434.1" y="119.3" font-size="10.5" fill="#d2d2d2" font-family="Liberation Sans">86</text><rect x="476.1" y="104" width="1" height="17" fill="#8a8a8a"/><rect x="480.5" y="112" width="1" height="9" fill="url(#tg)"/><rect x="485.0" y="112" width="1" height="9" fill="url(#tg)"/><rect x="489.4" y="112" width="1" height="9" fill="url(#tg)"/><rect x="493.8" y="112" width="1" height="9" fill="url(#tg)"/><rect x="498.3" y="110" width="1" height="11" fill="url(#tg)"/><rect x="502.7" y="112" width="1" height="9" fill="url(#tg)"/><rect x="507.1" y="112" width="1" height="9" fill="url(#tg)"/><rect x="511.6" y="112" width="1" height="9" fill="url(#tg)"/><rect x="516.0" y="112" width="1" height="9" fill="url(#tg)"/><text clip-path="url(#cpt)" x="478.4" y="119.3" font-size="10.5" fill="#d2d2d2" font-family="Liberation Sans">88</text><rect x="520.5" y="104" width="1" height="17" fill="#8a8a8a"/><rect x="524.9" y="112" width="1" height="9" fill="url(#tg)"/><rect x="529.3" y="112" width="1" height="9" fill="url(#tg)"/><rect x="533.8" y="112" width="1" height="9" fill="url(#tg)"/><rect x="538.2" y="112" width="1" height="9" fill="url(#tg)"/><rect x="542.6" y="110" width="1" height="11" fill="url(#tg)"/><rect x="547.1" y="112" width="1" height="9" fill="url(#tg)"/><rect x="551.5" y="112" width="1" height="9" fill="url(#tg)"/><rect x="555.9" y="112" width="1" height="9" fill="url(#tg)"/><rect x="560.4" y="112" width="1" height="9" fill="url(#tg)"/><text clip-path="url(#cpt)" x="522.8" y="119.3" font-size="10.5" fill="#d2d2d2" font-family="Liberation Sans">90</text><rect x="564.8" y="104" width="1" height="17" fill="#8a8a8a"/><rect x="569.2" y="112" width="1" height="9" fill="url(#tg)"/><rect x="573.7" y="112" width="1" height="9" fill="url(#tg)"/><rect x="578.1" y="112" width="1" height="9" fill="url(#tg)"/><rect x="582.5" y="112" width="1" height="9" fill="url(#tg)"/><rect x="587.0" y="110" width="1" height="11" fill="url(#tg)"/><rect x="591.4" y="112" width="1" height="9" fill="url(#tg)"/><rect x="595.8" y="112" width="1" height="9" fill="url(#tg)"/><rect x="600.3" y="112" width="1" height="9" fill="url(#tg)"/><rect x="604.7" y="112" width="1" height="9" fill="url(#tg)"/><text clip-path="url(#cpt)" x="567.1" y="119.3" font-size="10.5" fill="#d2d2d2" font-family="Liberation Sans">92</text><rect x="609.1" y="104" width="1" height="17" fill="#8a8a8a"/><rect x="613.6" y="112" width="1" height="9" fill="url(#tg)"/><rect x="618.0" y="112" width="1" height="9" fill="url(#tg)"/><rect x="622.5" y="112" width="1" height="9" fill="url(#tg)"/><rect x="626.9" y="112" width="1" height="9" fill="url(#tg)"/><rect x="631.3" y="110" width="1" height="11" fill="url(#tg)"/><rect x="635.8" y="112" width="1" height="9" fill="url(#tg)"/><rect x="640.2" y="112" width="1" height="9" fill="url(#tg)"/><rect x="644.6" y="112" width="1" height="9" fill="url(#tg)"/><rect x="649.1" y="112" width="1" height="9" fill="url(#tg)"/><text clip-path="url(#cpt)" x="611.4" y="119.3" font-size="10.5" fill="#d2d2d2" font-family="Liberation Sans">94</text><rect x="653.5" y="104" width="1" height="17" fill="#8a8a8a"/><rect x="657.9" y="112" width="1" height="9" fill="url(#tg)"/><rect x="662.4" y="112" width="1" height="9" fill="url(#tg)"/><rect x="666.8" y="112" width="1" height="9" fill="url(#tg)"/><rect x="671.2" y="112" width="1" height="9" fill="url(#tg)"/><rect x="675.7" y="110" width="1" height="11" fill="url(#tg)"/><rect x="680.1" y="112" width="1" height="9" fill="url(#tg)"/><rect x="684.5" y="112" width="1" height="9" fill="url(#tg)"/><rect x="689.0" y="112" width="1" height="9" fill="url(#tg)"/><rect x="693.4" y="112" width="1" height="9" fill="url(#tg)"/><text clip-path="url(#cpt)" x="655.8" y="119.3" font-size="10.5" fill="#d2d2d2" font-family="Liberation Sans">96</text><rect x="697.9" y="104" width="1" height="17" fill="#8a8a8a"/><rect x="702.3" y="112" width="1" height="9" fill="url(#tg)"/><rect x="706.7" y="112" width="1" height="9" fill="url(#tg)"/><rect x="711.2" y="112" width="1" height="9" fill="url(#tg)"/><rect x="715.6" y="112" width="1" height="9" fill="url(#tg)"/><rect x="720.0" y="110" width="1" height="11" fill="url(#tg)"/><rect x="724.5" y="112" width="1" height="9" fill="url(#tg)"/><rect x="728.9" y="112" width="1" height="9" fill="url(#tg)"/><rect x="733.3" y="112" width="1" height="9" fill="url(#tg)"/><rect x="737.8" y="112" width="1" height="9" fill="url(#tg)"/><text clip-path="url(#cpt)" x="700.1" y="119.3" font-size="10.5" fill="#d2d2d2" font-family="Liberation Sans">98</text><rect x="742.2" y="104" width="1" height="17" fill="#8a8a8a"/><rect x="746.6" y="112" width="1" height="9" fill="url(#tg)"/><rect x="751.1" y="112" width="1" height="9" fill="url(#tg)"/><rect x="755.5" y="112" width="1" height="9" fill="url(#tg)"/><rect x="759.9" y="112" width="1" height="9" fill="url(#tg)"/><rect x="764.4" y="110" width="1" height="11" fill="url(#tg)"/><rect x="768.8" y="112" width="1" height="9" fill="url(#tg)"/><rect x="773.2" y="112" width="1" height="9" fill="url(#tg)"/><rect x="777.7" y="112" width="1" height="9" fill="url(#tg)"/><rect x="782.1" y="112" width="1" height="9" fill="url(#tg)"/><text clip-path="url(#cpt)" x="744.5" y="119.3" font-size="10.5" fill="#d2d2d2" font-family="Liberation Sans">100</text><rect x="786.5" y="104" width="1" height="17" fill="#8a8a8a"/><rect x="791.0" y="112" width="1" height="9" fill="url(#tg)"/><rect x="795.4" y="112" width="1" height="9" fill="url(#tg)"/><rect x="799.9" y="112" width="1" height="9" fill="url(#tg)"/><rect x="804.3" y="112" width="1" height="9" fill="url(#tg)"/><rect x="808.7" y="110" width="1" height="11" fill="url(#tg)"/><rect x="813.2" y="112" width="1" height="9" fill="url(#tg)"/><rect x="817.6" y="112" width="1" height="9" fill="url(#tg)"/><rect x="822.0" y="112" width="1" height="9" fill="url(#tg)"/><rect x="826.5" y="112" width="1" height="9" fill="url(#tg)"/><text clip-path="url(#cpt)" x="788.8" y="119.3" font-size="10.5" fill="#d2d2d2" font-family="Liberation Sans">102</text><rect x="81" y="124.0" width="7" height="1" fill="url(#tgl)"/><text clip-path="url(#cpl)" x="75" y="101.1" font-size="10" fill="#d2d2d2" font-family="Liberation Sans">2</text><text clip-path="url(#cpl)" x="75" y="111.1" font-size="10" fill="#d2d2d2" font-family="Liberation Sans">1</text><text clip-path="url(#cpl)" x="75" y="121.1" font-size="10" fill="#d2d2d2" font-family="Liberation Sans">8</text><rect x="72" y="128.4" width="16" height="1" fill="#8a8a8a"/><rect x="81" y="132.8" width="7" height="1" fill="url(#tgl)"/><rect x="81" y="137.3" width="7" height="1" fill="url(#tgl)"/><rect x="81" y="141.7" width="7" height="1" fill="url(#tgl)"/><rect x="81" y="146.1" width="7" height="1" fill="url(#tgl)"/><rect x="78" y="150.6" width="10" height="1" fill="url(#tgl)"/><rect x="81" y="155.0" width="7" height="1" fill="url(#tgl)"/><rect x="81" y="159.4" width="7" height="1" fill="url(#tgl)"/><rect x="81" y="163.9" width="7" height="1" fill="url(#tgl)"/><rect x="81" y="168.3" width="7" height="1" fill="url(#tgl)"/><text clip-path="url(#cpl)" x="75" y="145.4" font-size="10" fill="#d2d2d2" font-family="Liberation Sans">2</text><text clip-path="url(#cpl)" x="75" y="155.4" font-size="10" fill="#d2d2d2" font-family="Liberation Sans">2</text><text clip-path="url(#cpl)" x="75" y="165.4" font-size="10" fill="#d2d2d2" font-family="Liberation Sans">0</text><rect x="72" y="172.8" width="16" height="1" fill="#8a8a8a"/><rect x="81" y="177.2" width="7" height="1" fill="url(#tgl)"/><rect x="81" y="181.6" width="7" height="1" fill="url(#tgl)"/><rect x="81" y="186.1" width="7" height="1" fill="url(#tgl)"/><rect x="81" y="190.5" width="7" height="1" fill="url(#tgl)"/><rect x="78" y="194.9" width="10" height="1" fill="url(#tgl)"/><rect x="81" y="199.4" width="7" height="1" fill="url(#tgl)"/><rect x="81" y="203.8" width="7" height="1" fill="url(#tgl)"/><rect x="81" y="208.2" width="7" height="1" fill="url(#tgl)"/><rect x="81" y="212.7" width="7" height="1" fill="url(#tgl)"/><text clip-path="url(#cpl)" x="75" y="189.8" font-size="10" fill="#d2d2d2" font-family="Liberation Sans">2</text><text clip-path="url(#cpl)" x="75" y="199.8" font-size="10" fill="#d2d2d2" font-family="Liberation Sans">2</text><text clip-path="url(#cpl)" x="75" y="209.8" font-size="10" fill="#d2d2d2" font-family="Liberation Sans">2</text><rect x="72" y="217.1" width="16" height="1" fill="#8a8a8a"/><rect x="81" y="221.5" width="7" height="1" fill="url(#tgl)"/><rect x="81" y="226.0" width="7" height="1" fill="url(#tgl)"/><rect x="81" y="230.4" width="7" height="1" fill="url(#tgl)"/><rect x="81" y="234.8" width="7" height="1" fill="url(#tgl)"/><rect x="78" y="239.3" width="10" height="1" fill="url(#tgl)"/><rect x="81" y="243.7" width="7" height="1" fill="url(#tgl)"/><rect x="81" y="248.1" width="7" height="1" fill="url(#tgl)"/><rect x="81" y="252.6" width="7" height="1" fill="url(#tgl)"/><rect x="81" y="257.0" width="7" height="1" fill="url(#tgl)"/><text clip-path="url(#cpl)" x="75" y="234.1" font-size="10" fill="#d2d2d2" font-family="Liberation Sans">2</text><text clip-path="url(#cpl)" x="75" y="244.1" font-size="10" fill="#d2d2d2" font-family="Liberation Sans">2</text><text clip-path="url(#cpl)" x="75" y="254.1" font-size="10" fill="#d2d2d2" font-family="Liberation Sans">4</text><rect x="72" y="261.5" width="16" height="1" fill="#8a8a8a"/><rect x="81" y="265.9" width="7" height="1" fill="url(#tgl)"/><rect x="81" y="270.3" width="7" height="1" fill="url(#tgl)"/><rect x="81" y="274.8" width="7" height="1" fill="url(#tgl)"/><rect x="81" y="279.2" width="7" height="1" fill="url(#tgl)"/><rect x="78" y="283.6" width="10" height="1" fill="url(#tgl)"/><rect x="81" y="288.1" width="7" height="1" fill="url(#tgl)"/><rect x="81" y="292.5" width="7" height="1" fill="url(#tgl)"/><rect x="81" y="296.9" width="7" height="1" fill="url(#tgl)"/><rect x="81" y="301.4" width="7" height="1" fill="url(#tgl)"/><text clip-path="url(#cpl)" x="75" y="278.5" font-size="10" fill="#d2d2d2" font-family="Liberation Sans">2</text><text clip-path="url(#cpl)" x="75" y="288.5" font-size="10" fill="#d2d2d2" font-family="Liberation Sans">2</text><text clip-path="url(#cpl)" x="75" y="298.5" font-size="10" fill="#d2d2d2" font-family="Liberation Sans">6</text><rect x="72" y="305.8" width="16" height="1" fill="#8a8a8a"/><rect x="81" y="310.2" width="7" height="1" fill="url(#tgl)"/><rect x="81" y="314.7" width="7" height="1" fill="url(#tgl)"/><rect x="81" y="319.1" width="7" height="1" fill="url(#tgl)"/><rect x="81" y="323.5" width="7" height="1" fill="url(#tgl)"/><rect x="78" y="328.0" width="10" height="1" fill="url(#tgl)"/><rect x="81" y="332.4" width="7" height="1" fill="url(#tgl)"/><rect x="81" y="336.8" width="7" height="1" fill="url(#tgl)"/><rect x="81" y="341.3" width="7" height="1" fill="url(#tgl)"/><rect x="81" y="345.7" width="7" height="1" fill="url(#tgl)"/><text clip-path="url(#cpl)" x="75" y="322.8" font-size="10" fill="#d2d2d2" font-family="Liberation Sans">2</text><text clip-path="url(#cpl)" x="75" y="332.8" font-size="10" fill="#d2d2d2" font-family="Liberation Sans">2</text><text clip-path="url(#cpl)" x="75" y="342.8" font-size="10" fill="#d2d2d2" font-family="Liberation Sans">8</text><rect x="72" y="350.1" width="16" height="1" fill="#8a8a8a"/><rect x="81" y="354.6" width="7" height="1" fill="url(#tgl)"/><rect x="81" y="359.0" width="7" height="1" fill="url(#tgl)"/><rect x="81" y="363.5" width="7" height="1" fill="url(#tgl)"/><rect x="81" y="367.9" width="7" height="1" fill="url(#tgl)"/><rect x="78" y="372.3" width="10" height="1" fill="url(#tgl)"/><rect x="81" y="376.8" width="7" height="1" fill="url(#tgl)"/><rect x="81" y="381.2" width="7" height="1" fill="url(#tgl)"/><rect x="81" y="385.6" width="7" height="1" fill="url(#tgl)"/><rect x="81" y="390.1" width="7" height="1" fill="url(#tgl)"/><text clip-path="url(#cpl)" x="75" y="367.1" font-size="10" fill="#d2d2d2" font-family="Liberation Sans">2</text><text clip-path="url(#cpl)" x="75" y="377.1" font-size="10" fill="#d2d2d2" font-family="Liberation Sans">3</text><text clip-path="url(#cpl)" x="75" y="387.1" font-size="10" fill="#d2d2d2" font-family="Liberation Sans">0</text><rect x="72" y="394.5" width="16" height="1" fill="#8a8a8a"/><rect x="81" y="398.9" width="7" height="1" fill="url(#tgl)"/><rect x="81" y="403.4" width="7" height="1" fill="url(#tgl)"/><rect x="81" y="407.8" width="7" height="1" fill="url(#tgl)"/><rect x="81" y="412.2" width="7" height="1" fill="url(#tgl)"/><rect x="78" y="416.7" width="10" height="1" fill="url(#tgl)"/><rect x="81" y="421.1" width="7" height="1" fill="url(#tgl)"/><rect x="81" y="425.5" width="7" height="1" fill="url(#tgl)"/><rect x="81" y="430.0" width="7" height="1" fill="url(#tgl)"/><rect x="81" y="434.4" width="7" height="1" fill="url(#tgl)"/><text clip-path="url(#cpl)" x="75" y="411.5" font-size="10" fill="#d2d2d2" font-family="Liberation Sans">2</text><text clip-path="url(#cpl)" x="75" y="421.5" font-size="10" fill="#d2d2d2" font-family="Liberation Sans">3</text><text clip-path="url(#cpl)" x="75" y="431.5" font-size="10" fill="#d2d2d2" font-family="Liberation Sans">2</text><rect x="72" y="438.9" width="16" height="1" fill="#8a8a8a"/><rect x="81" y="443.3" width="7" height="1" fill="url(#tgl)"/><rect x="81" y="447.7" width="7" height="1" fill="url(#tgl)"/><rect x="81" y="452.2" width="7" height="1" fill="url(#tgl)"/><rect x="81" y="456.6" width="7" height="1" fill="url(#tgl)"/><rect x="78" y="461.0" width="10" height="1" fill="url(#tgl)"/><rect x="81" y="465.5" width="7" height="1" fill="url(#tgl)"/><rect x="81" y="469.9" width="7" height="1" fill="url(#tgl)"/><rect x="81" y="474.3" width="7" height="1" fill="url(#tgl)"/><rect x="81" y="478.8" width="7" height="1" fill="url(#tgl)"/><text clip-path="url(#cpl)" x="75" y="455.9" font-size="10" fill="#d2d2d2" font-family="Liberation Sans">2</text><text clip-path="url(#cpl)" x="75" y="465.9" font-size="10" fill="#d2d2d2" font-family="Liberation Sans">3</text><text clip-path="url(#cpl)" x="75" y="475.9" font-size="10" fill="#d2d2d2" font-family="Liberation Sans">4</text><rect x="72" y="483.2" width="16" height="1" fill="#8a8a8a"/><rect x="81" y="487.6" width="7" height="1" fill="url(#tgl)"/><rect x="81" y="492.1" width="7" height="1" fill="url(#tgl)"/><rect x="81" y="496.5" width="7" height="1" fill="url(#tgl)"/><rect x="81" y="500.9" width="7" height="1" fill="url(#tgl)"/><rect x="78" y="505.4" width="10" height="1" fill="url(#tgl)"/><rect x="81" y="509.8" width="7" height="1" fill="url(#tgl)"/><rect x="81" y="514.2" width="7" height="1" fill="url(#tgl)"/><rect x="81" y="518.7" width="7" height="1" fill="url(#tgl)"/><rect x="81" y="523.1" width="7" height="1" fill="url(#tgl)"/><text clip-path="url(#cpl)" x="75" y="500.2" font-size="10" fill="#d2d2d2" font-family="Liberation Sans">2</text><text clip-path="url(#cpl)" x="75" y="510.2" font-size="10" fill="#d2d2d2" font-family="Liberation Sans">3</text><text clip-path="url(#cpl)" x="75" y="520.2" font-size="10" fill="#d2d2d2" font-family="Liberation Sans">6</text><rect x="72" y="527.6" width="16" height="1" fill="#8a8a8a"/><rect x="81" y="532.0" width="7" height="1" fill="url(#tgl)"/><rect x="81" y="536.4" width="7" height="1" fill="url(#tgl)"/><rect x="81" y="540.9" width="7" height="1" fill="url(#tgl)"/><rect x="81" y="545.3" width="7" height="1" fill="url(#tgl)"/><rect x="78" y="549.7" width="10" height="1" fill="url(#tgl)"/><rect x="81" y="554.2" width="7" height="1" fill="url(#tgl)"/><rect x="81" y="558.6" width="7" height="1" fill="url(#tgl)"/><rect x="81" y="563.0" width="7" height="1" fill="url(#tgl)"/><rect x="81" y="567.5" width="7" height="1" fill="url(#tgl)"/><text clip-path="url(#cpl)" x="75" y="544.6" font-size="10" fill="#d2d2d2" font-family="Liberation Sans">2</text><text clip-path="url(#cpl)" x="75" y="554.6" font-size="10" fill="#d2d2d2" font-family="Liberation Sans">3</text><text clip-path="url(#cpl)" x="75" y="564.6" font-size="10" fill="#d2d2d2" font-family="Liberation Sans">8</text><rect x="72" y="571.9" width="16" height="1" fill="#8a8a8a"/><rect x="81" y="576.3" width="7" height="1" fill="url(#tgl)"/><rect x="81" y="580.8" width="7" height="1" fill="url(#tgl)"/><rect x="81" y="585.2" width="7" height="1" fill="url(#tgl)"/><rect x="81" y="589.6" width="7" height="1" fill="url(#tgl)"/><rect x="78" y="594.1" width="10" height="1" fill="url(#tgl)"/><rect x="81" y="598.5" width="7" height="1" fill="url(#tgl)"/><rect x="81" y="602.9" width="7" height="1" fill="url(#tgl)"/><rect x="81" y="607.4" width="7" height="1" fill="url(#tgl)"/><text clip-path="url(#cpl)" x="75" y="588.9" font-size="10" fill="#d2d2d2" font-family="Liberation Sans">2</text><text clip-path="url(#cpl)" x="75" y="598.9" font-size="10" fill="#d2d2d2" font-family="Liberation Sans">4</text><text clip-path="url(#cpl)" x="75" y="608.9" font-size="10" fill="#d2d2d2" font-family="Liberation Sans">0</text><text clip-path="url(#cpl)" x="75" y="633.2" font-size="10" fill="#d2d2d2" font-family="Liberation Sans">2</text><text clip-path="url(#cpl)" x="75" y="643.2" font-size="10" fill="#d2d2d2" font-family="Liberation Sans">4</text><text clip-path="url(#cpl)" x="75" y="653.2" font-size="10" fill="#d2d2d2" font-family="Liberation Sans">2</text><text clip-path="url(#cpl)" x="75" y="677.6" font-size="10" fill="#d2d2d2" font-family="Liberation Sans">2</text><text clip-path="url(#cpl)" x="75" y="687.6" font-size="10" fill="#d2d2d2" font-family="Liberation Sans">4</text><text clip-path="url(#cpl)" x="75" y="697.6" font-size="10" fill="#d2d2d2" font-family="Liberation Sans">4</text><rect x="72" y="104" width="16" height="17" fill="#2e2e2e"/><path d="M76.5 105 V121 M72 110.5 H88" stroke="#6a6a6a" stroke-width="1"/></svg>
<div class="a" style="left:88px;top:121px;width:856px;height:488px;background:#dbdfdd"></div>
<svg class="a" style="left:88px;top:121px" width="856" height="488" viewBox="88 121 856 488"><path d="M393 274 H294.5 C253.2 274 222.5 304.5 222.5 345.75 C222.5 387.0 253.2 417.5 294.5 417.5 H393" fill="none" stroke="#f79a00" stroke-width="30"/><path d="M308.5 258.5 H766.5 V345 C766.5 528 601 545 577 545 H497 C473 545 308.5 528 308.5 345 Z" fill="#f79a00" stroke="#8a6a80" stroke-width="1"/><rect x="362.5" y="566.5" width="349.5" height="32.5" rx="16.25" fill="#f79a00" stroke="#8a6a80" stroke-width="1"/><path d="M393 274 H294.5 C253.2 274 222.5 304.5 222.5 345.75 C222.5 387.0 253.2 417.5 294.5 417.5 H393 Z" fill="none" stroke="#7a5e8a" stroke-width="1"/><rect x="222.5" y="258.5" width="544" height="341" fill="none" stroke="#7373e6" stroke-width="1"/><rect x="220.0" y="256.0" width="5" height="5" fill="#f4f4ff" stroke="#6a6ad8" stroke-width="1"/><rect x="220.0" y="426.5" width="5" height="5" fill="#f4f4ff" stroke="#6a6ad8" stroke-width="1"/><rect x="220.0" y="597.0" width="5" height="5" fill="#f4f4ff" stroke="#6a6ad8" stroke-width="1"/><rect x="492.0" y="597.0" width="5" height="5" fill="#f4f4ff" stroke="#6a6ad8" stroke-width="1"/><rect x="764.0" y="597.0" width="5" height="5" fill="#f4f4ff" stroke="#6a6ad8" stroke-width="1"/><rect x="764.0" y="426.5" width="5" height="5" fill="#f4f4ff" stroke="#6a6ad8" stroke-width="1"/><rect x="764.0" y="256.0" width="5" height="5" fill="#f4f4ff" stroke="#6a6ad8" stroke-width="1"/><rect x="306.3" y="256.3" width="4.4" height="4.4" fill="#5555d8"/><rect x="292.3" y="271.8" width="4.4" height="4.4" fill="#5555d8"/><rect x="390.8" y="271.8" width="4.4" height="4.4" fill="#5555d8"/><rect x="220.3" y="343.3" width="4.4" height="4.4" fill="#5555d8"/><rect x="306.3" y="343.8" width="4.4" height="4.4" fill="#5555d8"/><rect x="306.3" y="353.3" width="4.4" height="4.4" fill="#5555d8"/><rect x="292.3" y="415.3" width="4.4" height="4.4" fill="#5555d8"/><rect x="390.8" y="415.3" width="4.4" height="4.4" fill="#5555d8"/><rect x="764.3" y="353.8" width="4.4" height="4.4" fill="#5555d8"/><rect x="494.8" y="542.8" width="4.4" height="4.4" fill="#5555d8"/><rect x="574.8" y="542.8" width="4.4" height="4.4" fill="#5555d8"/><rect x="375.8" y="564.3" width="4.4" height="4.4" fill="#5555d8"/><rect x="360.3" y="580.3" width="4.4" height="4.4" fill="#5555d8"/><rect x="375.8" y="596.8" width="4.4" height="4.4" fill="#5555d8"/><rect x="693.8" y="564.3" width="4.4" height="4.4" fill="#5555d8"/><rect x="709.8" y="580.3" width="4.4" height="4.4" fill="#5555d8"/><rect x="693.8" y="596.8" width="4.4" height="4.4" fill="#5555d8"/><rect x="534.8" y="579.8" width="4.4" height="4.4" fill="#5555d8"/><ellipse cx="849" cy="608" rx="6" ry="7" fill="#fafafa" stroke="#b8b8b8" stroke-width="1.2"/><ellipse cx="864" cy="608" rx="6" ry="7" fill="#fafafa" stroke="#b8b8b8" stroke-width="1.2"/></svg>
<div class="a" style="left:431px;top:127px;width:175px;height:293px;background:#f0f0f0;border:1px solid #979797;box-shadow:1px 1px 2px rgba(0,0,0,.25)"></div>
<div class="a" style="left:462px;top:128px;width:1px;height:291px;background:#e2e3e3"></div>
<div class="a" style="left:463px;top:128px;width:1px;height:291px;background:#ffffff"></div>
<div class="a" style="left:464px;top:178px;width:139px;height:1px;background:#e0e0e0"></div>
<div class="a" style="left:464px;top:179px;width:139px;height:1px;background:#ffffff"></div>
<div class="a" style="left:464px;top:207px;width:139px;height:1px;background:#e0e0e0"></div>
<div class="a" style="left:464px;top:208px;width:139px;height:1px;background:#ffffff"></div>
<div class="a" style="left:464px;top:279px;width:139px;height:1px;background:#e0e0e0"></div>
<div class="a" style="left:464px;top:280px;width:139px;height:1px;background:#ffffff"></div>
<div class="a" style="left:464px;top:352px;width:139px;height:1px;background:#e0e0e0"></div>
<div class="a" style="left:464px;top:353px;width:139px;height:1px;background:#ffffff"></div>
<div class="a" style="left:435px;top:210px;width:168px;height:23px;background:linear-gradient(#f2f5fa,#e4ebf4);border:1px solid #b9c6dc;border-radius:2px"></div>
<div class="t" style="left:466px;top:134px;font-size:12px;line-height:14px;color:#111">还原(U)圆角半径</div>
<div class="t" style="left:466px;top:155px;font-size:12px;line-height:14px;color:#111">重做(R)对齐</div>
<div class="t" style="left:466px;top:215px;font-size:12px;line-height:14px;color:#111">编组</div>
<div class="t" style="left:466px;top:236px;font-size:12px;line-height:14px;color:#111">连接</div>
<div class="t" style="left:466px;top:257px;font-size:12px;line-height:14px;color:#111">平均...</div>
<div class="t" style="left:466px;top:287px;font-size:12px;line-height:14px;color:#111">建立剪切蒙版</div>
<div class="t" style="left:466px;top:308px;font-size:12px;line-height:14px;color:#111">建立复合路径</div>
<div class="t" style="left:466px;top:329px;font-size:12px;line-height:14px;color:#111">建立参考线</div>
<div class="t" style="left:466px;top:359px;font-size:12px;line-height:14px;color:#111">变换</div>
<div class="t" style="left:466px;top:381px;font-size:12px;line-height:14px;color:#111">排列</div>
<div class="t" style="left:466px;top:401px;font-size:12px;line-height:14px;color:#111">选择</div>
<div class="t" style="left:466px;top:184px;font-size:12px;line-height:14px;color:#a0a0a0">透视</div>
<svg class="a" style="left:591px;top:188px;" width="4" height="7" viewBox="0 0 4 7"><path d="M0 0v7l4-3.5z" fill="#8a8a8a"/></svg>
<svg class="a" style="left:591px;top:362px;" width="4" height="7" viewBox="0 0 4 7"><path d="M0 0v7l4-3.5z" fill="#222"/></svg>
<svg class="a" style="left:591px;top:384px;" width="4" height="7" viewBox="0 0 4 7"><path d="M0 0v7l4-3.5z" fill="#222"/></svg>
<svg class="a" style="left:591px;top:404px;" width="4" height="7" viewBox="0 0 4 7"><path d="M0 0v7l4-3.5z" fill="#222"/></svg>
<svg class="a" style="left:438px;top:188px;" width="78" height="52" viewBox="0 0 78 52"><ellipse cx="39" cy="25.75" rx="31.8" ry="18.4" transform="rotate(-4 39 25.75)" fill="none" stroke="#e3272b" stroke-width="7.2"/></svg>
<div class="a" style="left:944px;top:104px;width:16px;height:505px;background:#3a3a3a"></div>
<div class="a" style="left:944px;top:121px;width:1px;height:488px;background:#2c2c2c"></div>
<svg class="a" style="left:947px;top:110px;" width="11" height="8" viewBox="0 0 11 8"><path d="M0 7 L5.25 0 L10.5 7z" fill="#e6e6e6"/></svg>
<div class="a" style="left:944px;top:400px;width:16px;height:15px;background:#a3a3a3"></div>
<div class="a" style="left:960px;top:86px;width:3px;height:523px;background:#282828"></div>
<div class="a" style="left:963px;top:86px;width:37px;height:523px;background:#4a4a4a"></div>
<div class="a" style="left:963px;top:86px;width:37px;height:11px;background:#383838"></div>
<svg class="a" style="left:988px;top:89px;" width="8" height="6" viewBox="0 0 8 6"><path d="M3.5 0v6L0 3z M7.5 0v6L4 3z" fill="#cfcfcf"/></svg>
<div class="a" style="left:963px;top:164px;width:37px;height:1px;background:#3a3a3a"></div>
<svg class="a" style="left:971px;top:101px;" width="20" height="5" viewBox="0 0 20 5"><rect x="0" y="0" width="1" height="4" fill="#1e1e1e"/><rect x="2" y="0" width="1" height="4" fill="#1e1e1e"/><rect x="4" y="0" width="1" height="4" fill="#1e1e1e"/><rect x="6" y="0" width="1" height="4" fill="#1e1e1e"/><rect x="8" y="0" width="1" height="4" fill="#1e1e1e"/><rect x="10" y="0" width="1" height="4" fill="#1e1e1e"/><rect x="12" y="0" width="1" height="4" fill="#1e1e1e"/><rect x="14" y="0" width="1" height="4" fill="#1e1e1e"/><rect x="16" y="0" width="1" height="4" fill="#1e1e1e"/><rect x="18" y="0" width="1" height="4" fill="#1e1e1e"/></svg>
<div class="a" style="left:963px;top:259px;width:37px;height:1px;background:#3a3a3a"></div>
<svg class="a" style="left:971px;top:167px;" width="20" height="5" viewBox="0 0 20 5"><rect x="0" y="0" width="1" height="4" fill="#1e1e1e"/><rect x="2" y="0" width="1" height="4" fill="#1e1e1e"/><rect x="4" y="0" width="1" height="4" fill="#1e1e1e"/><rect x="6" y="0" width="1" height="4" fill="#1e1e1e"/><rect x="8" y="0" width="1" height="4" fill="#1e1e1e"/><rect x="10" y="0" width="1" height="4" fill="#1e1e1e"/><rect x="12" y="0" width="1" height="4" fill="#1e1e1e"/><rect x="14" y="0" width="1" height="4" fill="#1e1e1e"/><rect x="16" y="0" width="1" height="4" fill="#1e1e1e"/><rect x="18" y="0" width="1" height="4" fill="#1e1e1e"/></svg>
<div class="a" style="left:963px;top:352px;width:37px;height:1px;background:#3a3a3a"></div>
<svg class="a" style="left:971px;top:262px;" width="20" height="5" viewBox="0 0 20 5"><rect x="0" y="0" width="1" height="4" fill="#1e1e1e"/><rect x="2" y="0" width="1" height="4" fill="#1e1e1e"/><rect x="4" y="0" width="1" height="4" fill="#1e1e1e"/><rect x="6" y="0" width="1" height="4" fill="#1e1e1e"/><rect x="8" y="0" width="1" height="4" fill="#1e1e1e"/><rect x="10" y="0" width="1" height="4" fill="#1e1e1e"/><rect x="12" y="0" width="1" height="4" fill="#1e1e1e"/><rect x="14" y="0" width="1" height="4" fill="#1e1e1e"/><rect x="16" y="0" width="1" height="4" fill="#1e1e1e"/><rect x="18" y="0" width="1" height="4" fill="#1e1e1e"/></svg>
<div class="a" style="left:963px;top:447px;width:37px;height:1px;background:#3a3a3a"></div>
<svg class="a" style="left:971px;top:355px;" width="20" height="5" viewBox="0 0 20 5"><rect x="0" y="0" width="1" height="4" fill="#1e1e1e"/><rect x="2" y="0" width="1" height="4" fill="#1e1e1e"/><rect x="4" y="0" width="1" height="4" fill="#1e1e1e"/><rect x="6" y="0" width="1" height="4" fill="#1e1e1e"/><rect x="8" y="0" width="1" height="4" fill="#1e1e1e"/><rect x="10" y="0" width="1" height="4" fill="#1e1e1e"/><rect x="12" y="0" width="1" height="4" fill="#1e1e1e"/><rect x="14" y="0" width="1" height="4" fill="#1e1e1e"/><rect x="16" y="0" width="1" height="4" fill="#1e1e1e"/><rect x="18" y="0" width="1" height="4" fill="#1e1e1e"/></svg>
<div class="a" style="left:963px;top:515px;width:37px;height:1px;background:#3a3a3a"></div>
<svg class="a" style="left:971px;top:450px;" width="20" height="5" viewBox="0 0 20 5"><rect x="0" y="0" width="1" height="4" fill="#1e1e1e"/><rect x="2" y="0" width="1" height="4" fill="#1e1e1e"/><rect x="4" y="0" width="1" height="4" fill="#1e1e1e"/><rect x="6" y="0" width="1" height="4" fill="#1e1e1e"/><rect x="8" y="0" width="1" height="4" fill="#1e1e1e"/><rect x="10" y="0" width="1" height="4" fill="#1e1e1e"/><rect x="12" y="0" width="1" height="4" fill="#1e1e1e"/><rect x="14" y="0" width="1" height="4" fill="#1e1e1e"/><rect x="16" y="0" width="1" height="4" fill="#1e1e1e"/><rect x="18" y="0" width="1" height="4" fill="#1e1e1e"/></svg>
<div class="a" style="left:993px;top:98px;width:1px;height:417px;background:#4f4f4f"></div>
<svg class="a" style="left:970px;top:112px;" width="24" height="18" viewBox="0 0 24 18"><ellipse cx="12" cy="8.5" rx="10" ry="7" fill="#d4d4d4"/><ellipse cx="6" cy="3.3" rx="3.5" ry="1.6" fill="#4a4a4a"/><circle cx="6.5" cy="9.5" r="1.5" fill="#3a3a3a"/><circle cx="10.5" cy="12" r="1.5" fill="#3a3a3a"/><circle cx="15.5" cy="11.5" r="1.5" fill="#3a3a3a"/><circle cx="19" cy="8" r="1.4" fill="#3a3a3a"/><circle cx="15" cy="4.5" r="1.2" fill="#3a3a3a"/></svg>
<svg class="a" style="left:972px;top:139px" width="20" height="19" viewBox="0 0 20 19"><defs><linearGradient id="gq" x1="0" y1="0" x2="1" y2="1"><stop offset="0" stop-color="#eee"/><stop offset="1" stop-color="#222"/></linearGradient></defs><path d="M1.5 1.5 C10 1.5 18 8 18.5 17.5 H1.5Z" fill="url(#gq)" stroke="#ddd" stroke-width="1.3"/></svg>
<svg class="a" style="left:973px;top:182px;" width="17" height="12" viewBox="0 0 17 12"><rect x="0" y="0.5" width="16" height="11" fill="#cfcfcf"/><rect x="1.8" y="2.0" width="3.6" height="3" fill="#141414"/><rect x="6.7" y="2.0" width="3.6" height="3" fill="#3a3a3a"/><rect x="11.6" y="2.0" width="3.6" height="3" fill="#a8a8a8"/><rect x="1.8" y="6.6" width="3.6" height="3" fill="#808080"/><rect x="6.7" y="6.6" width="3.6" height="3" fill="#4a4a4a"/><rect x="11.6" y="6.6" width="3.6" height="3" fill="#222"/></svg>
<svg class="a" style="left:974px;top:204px;" width="17" height="22" viewBox="0 0 17 22"><rect x="3" y="11" width="10" height="10" fill="#c8c8c8"/><path d="M5 11 L3 4 M8 11 V1 M11 11 L14 4" stroke="#d8d8d8" stroke-width="2"/><ellipse cx="3" cy="4" rx="2" ry="3" fill="#ddd"/><ellipse cx="14" cy="4" rx="2.5" ry="2" fill="#ddd"/></svg>
<svg class="a" style="left:972px;top:234px;" width="19" height="17" viewBox="0 0 19 17"><circle cx="9.5" cy="4.5" r="4" fill="#d6d6d6"/><circle cx="5" cy="9" r="4" fill="#d6d6d6"/><circle cx="14" cy="9" r="4" fill="#d6d6d6"/><path d="M9.5 8 L11 15 H8Z M5 16 H14" stroke="#d6d6d6" stroke-width="1.5" fill="#d6d6d6"/></svg>
<svg class="a" style="left:973px;top:275px;" width="17" height="14" viewBox="0 0 17 14"><rect x="0" y="0.5" width="17" height="1.5" fill="#d4d4d4"/><rect x="0" y="5.5" width="17" height="2.5" fill="#d4d4d4"/><rect x="0" y="10.5" width="17" height="3" fill="#d4d4d4"/></svg>
<div class="a" style="left:973px;top:303px;width:17px;height:13px;border:1px solid #d0d0d0;background:linear-gradient(90deg,#2e2e2e,#d8d8d8)"></div>
<svg class="a" style="left:972px;top:329px;" width="19" height="18" viewBox="0 0 19 18"><circle cx="7" cy="7" r="6" fill="#e0e0e0"/><circle cx="11.5" cy="11" r="6" fill="#4a4a4a" stroke="#d8d8d8" stroke-width="1.6"/></svg>
<svg class="a" style="left:971px;top:369px;" width="21" height="17" viewBox="0 0 21 17"><path d="M6 15 C2 15 1 12 1 10 C1 6 4 5 6 5.5 C7 2 10 1 12 1 C16 1 19 4 19 8 C20.5 9 21 10.5 21 11.5 C21 13.5 19 15 17 15Z" fill="none" stroke="#d6d6d6" stroke-width="2"/><path d="M5 11 C6 8 9 8 11 10 C13 12 15 12 16 10" fill="none" stroke="#d6d6d6" stroke-width="1.8"/></svg>
<svg class="a" style="left:972px;top:396px;" width="19" height="18" viewBox="0 0 19 18"><circle cx="9.5" cy="9" r="8" fill="none" stroke="#d0d0d0" stroke-width="1.6" stroke-dasharray="2 1.6"/><circle cx="9.5" cy="9" r="5.5" fill="#d4d4d4"/></svg>
<svg class="a" style="left:972px;top:424px;" width="19" height="18" viewBox="0 0 19 18"><rect x="6" y="1" width="12" height="12" fill="#444" stroke="#d4d4d4" stroke-width="1.5"/><rect x="1" y="9" width="6" height="6" fill="#6a6a6a" stroke="#d4d4d4" stroke-width="1.4"/><rect x="4" y="12" width="6" height="5" fill="#888" stroke="#d4d4d4" stroke-width="1.2"/></svg>
<svg class="a" style="left:973px;top:463px;" width="18" height="18" viewBox="0 0 18 18"><path d="M9 1 L17 6 L9 11 L1 6Z" fill="#d6d6d6"/><path d="M3 9.5 L9 13.5 L15 9.5 L17 11 L9 16.5 L1 11Z" fill="#d6d6d6"/></svg>
<svg class="a" style="left:972px;top:489px;" width="19" height="20" viewBox="0 0 19 20"><rect x="1" y="1" width="11" height="12" fill="none" stroke="#d4d4d4" stroke-width="1.5"/><rect x="6" y="7" width="12" height="11" fill="#555" stroke="#d4d4d4" stroke-width="1.5"/></svg>
<div class="a" style="left:710px;top:103px;width:227px;height:140px;background:#2a2a2a"></div>
<div class="a" style="left:710px;top:104px;width:226px;height:13px;background:#363636"></div>
<svg class="a" style="left:907px;top:110px;" width="8" height="6" viewBox="0 0 8 6"><path d="M3.5 0v6L0 3z M7.5 0v6L4 3z" fill="#bdbdbd"/></svg>
<svg class="a" style="left:924px;top:109px;" width="8" height="7" viewBox="0 0 8 7"><path d="M1 0.5 L7 6.5 M7 0.5 L1 6.5" stroke="#c8c8c8" stroke-width="1.5"/></svg>
<div class="a" style="left:710px;top:117px;width:226px;height:19px;background:#3c3c3c"></div>
<div class="a" style="left:713px;top:118px;width:37px;height:18px;background:#454545"></div>
<div class="t" style="left:718px;top:120px;font-size:12px;line-height:14px;color:#b4b4b4">变换</div>
<div class="a" style="left:751px;top:118px;width:42px;height:18px;background:#4a4a4a"></div>
<svg class="a" style="left:754px;top:121px;" width="6" height="11" viewBox="0 0 6 11"><path d="M0.5 4 L3 1 L5.5 4 M0.5 7 L3 10 L5.5 7" fill="none" stroke="#d8d8d8" stroke-width="1.2"/></svg>
<div class="t" style="left:762px;top:120px;font-size:12px;line-height:14px;color:#e6e6e6">对齐</div>
<div class="a" style="left:794px;top:118px;width:73px;height:18px;background:#454545"></div>
<div class="t" style="left:802px;top:120px;font-size:12px;line-height:14px;color:#b4b4b4">路径查找器</div>
<svg class="a" style="left:918px;top:122px;" width="15" height="9" viewBox="0 0 15 9"><path d="M0 3h4.5l-2.25 2.5z" fill="#d0d0d0"/><rect x="6" y="0.5" width="8" height="1.2" fill="#d0d0d0"/><rect x="6" y="3.5" width="8" height="1.2" fill="#d0d0d0"/><rect x="6" y="6.5" width="8" height="1.2" fill="#d0d0d0"/></svg>
<div class="a" style="left:710px;top:136px;width:226px;height:106px;background:#4a4a4a"></div>
<div class="t" style="left:716px;top:142px;font-size:11px;line-height:13px;color:#dcdcdc">对齐对象 :</div>
<div class="a" style="left:715px;top:186px;width:215px;height:1px;background:#474747"></div>
<div class="a" style="left:715px;top:187px;width:215px;height:1px;background:#5d5d5d"></div>
<div class="t" style="left:716px;top:196px;font-size:11px;line-height:13px;color:#dcdcdc">分布对象 :</div>
<svg class="a" style="left:0;top:0" width="1000" height="609"><path d="M721.5 164 L721.5 178" stroke="#d6d6d6" stroke-width="1"/><rect x="723" y="164.5" width="8" height="5" fill="#c4c4c4" stroke="#e0e0e0" stroke-width="0.6"/><rect x="723.5" y="172.5" width="11" height="4" fill="none" stroke="#d6d6d6" stroke-width="1"/><path d="M763.5 163 L763.5 179" stroke="#d6d6d6" stroke-width="1"/><rect x="760" y="165" width="8" height="5" fill="#c4c4c4" stroke="#e0e0e0" stroke-width="0.6"/><rect x="758.5" y="173.0" width="10" height="4" fill="none" stroke="#d6d6d6" stroke-width="1"/><path d="M805.5 164 L805.5 178" stroke="#d6d6d6" stroke-width="1"/><rect x="797" y="164.5" width="8" height="5" fill="#c4c4c4" stroke="#e0e0e0" stroke-width="0.6"/><rect x="793.5" y="172.5" width="11" height="4" fill="none" stroke="#d6d6d6" stroke-width="1"/><path d="M840 164.5 L856 164.5" stroke="#d6d6d6" stroke-width="1"/><rect x="842.5" y="166.5" width="5" height="10" fill="none" stroke="#d6d6d6" stroke-width="1"/><rect x="848.5" y="166" width="5" height="7" fill="#c4c4c4" stroke="#e0e0e0" stroke-width="0.6"/><path d="M875 170.5 L891 170.5" stroke="#d6d6d6" stroke-width="1"/><rect x="877.5" y="165.5" width="4" height="10" fill="none" stroke="#d6d6d6" stroke-width="1"/><rect x="883" y="167.5" width="5" height="6" fill="#c4c4c4" stroke="#e0e0e0" stroke-width="0.6"/><path d="M911 178.5 L927 178.5" stroke="#d6d6d6" stroke-width="1"/><rect x="912.5" y="166.5" width="5" height="10" fill="none" stroke="#d6d6d6" stroke-width="1"/><rect x="919" y="170" width="5" height="7" fill="#c4c4c4" stroke="#e0e0e0" stroke-width="0.6"/><path d="M720 219.5 L736 219.5" stroke="#d6d6d6" stroke-width="1"/><rect x="725" y="220" width="6" height="4" fill="#c4c4c4" stroke="#e0e0e0" stroke-width="0.6"/><path d="M720 225.5 L736 225.5" stroke="#d6d6d6" stroke-width="1"/><rect x="724.5" y="226.5" width="8" height="4" fill="none" stroke="#d6d6d6" stroke-width="1"/><path d="M755 221.5 L772 221.5" stroke="#d6d6d6" stroke-width="1"/><rect x="761" y="218" width="7" height="6" fill="#c4c4c4" stroke="#e0e0e0" stroke-width="0.6"/><path d="M755 228.5 L772 228.5" stroke="#d6d6d6" stroke-width="1"/><rect x="758.5" y="225.5" width="10" height="5" fill="none" stroke="#d6d6d6" stroke-width="1"/><rect x="796" y="219" width="7" height="5" fill="#c4c4c4" stroke="#e0e0e0" stroke-width="0.6"/><path d="M791 223.5 L807 223.5" stroke="#d6d6d6" stroke-width="1"/><rect x="794.5" y="226.5" width="10" height="4" fill="none" stroke="#d6d6d6" stroke-width="1"/><path d="M791 231.5 L807 231.5" stroke="#d6d6d6" stroke-width="1"/><path d="M843.5 217 L843.5 232" stroke="#d6d6d6" stroke-width="1"/><rect x="844.5" y="220.5" width="4" height="8" fill="none" stroke="#d6d6d6" stroke-width="1"/><path d="M850.5 217 L850.5 232" stroke="#d6d6d6" stroke-width="1"/><rect x="851" y="221" width="4" height="6" fill="#c4c4c4" stroke="#e0e0e0" stroke-width="0.6"/><path d="M880.5 217 L880.5 232" stroke="#d6d6d6" stroke-width="1"/><rect x="878.5" y="220.5" width="4" height="9" fill="none" stroke="#d6d6d6" stroke-width="1"/><path d="M887.5 217 L887.5 232" stroke="#d6d6d6" stroke-width="1"/><rect x="885" y="222" width="5" height="6" fill="#c4c4c4" stroke="#e0e0e0" stroke-width="0.6"/><rect x="911" y="222" width="5" height="6" fill="#c4c4c4" stroke="#e0e0e0" stroke-width="0.6"/><path d="M915.5 217 L915.5 232" stroke="#d6d6d6" stroke-width="1"/><rect x="917.5" y="220.5" width="4" height="8" fill="none" stroke="#d6d6d6" stroke-width="1"/><path d="M922.5 217 L922.5 232" stroke="#d6d6d6" stroke-width="1"/></svg>
</body></html>
